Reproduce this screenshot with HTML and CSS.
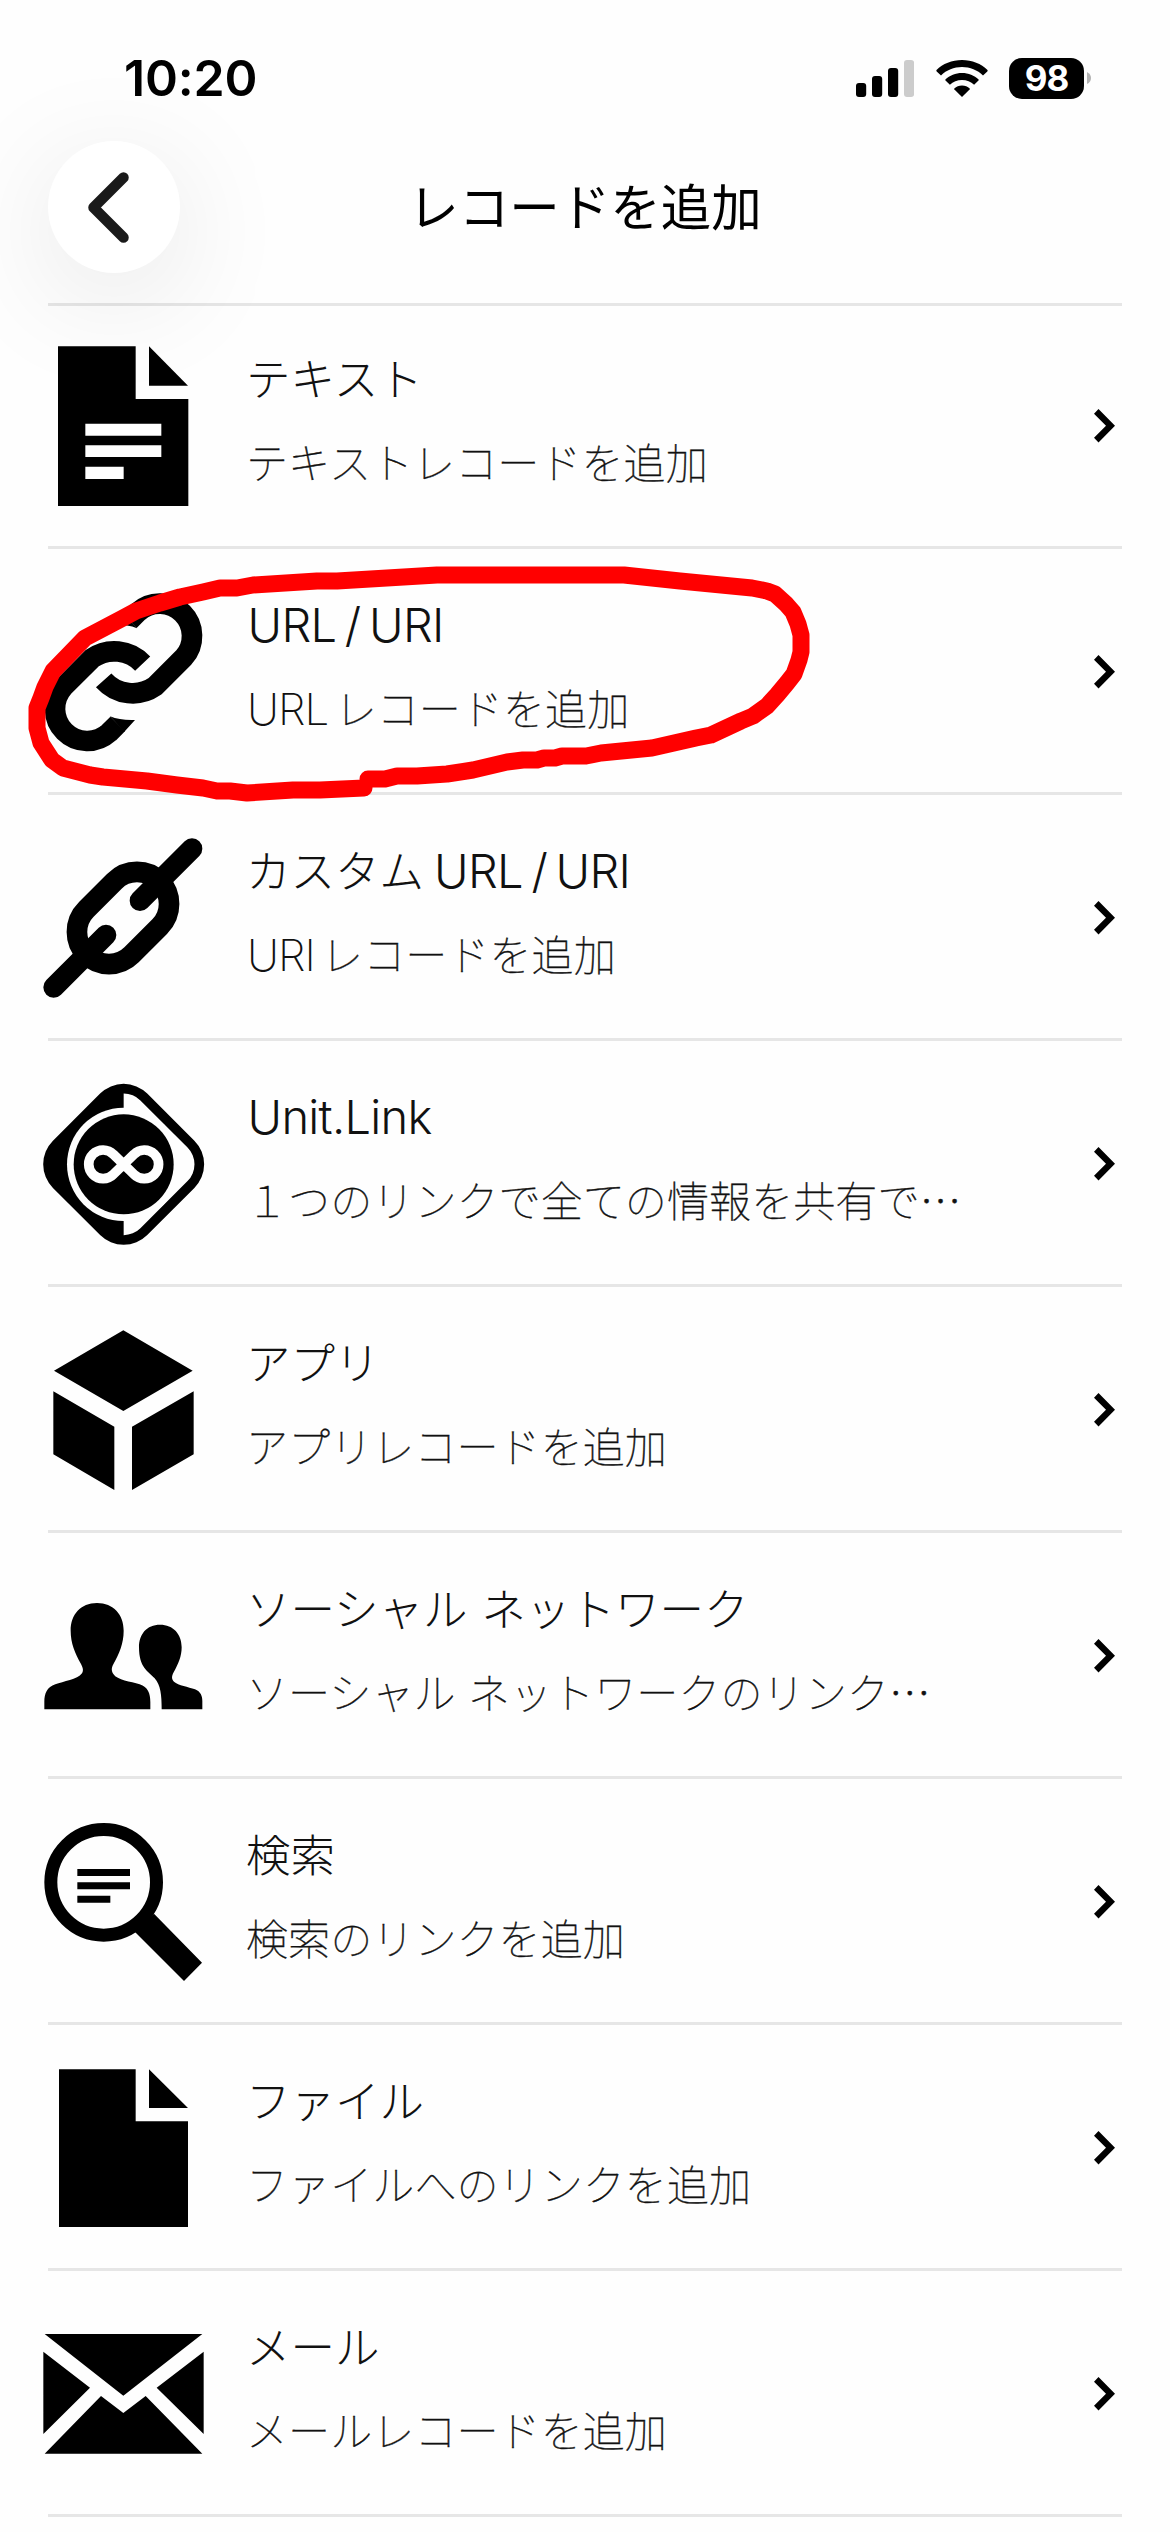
FILE: index.html
```html
<!DOCTYPE html>
<html lang="ja">
<head>
<meta charset="utf-8">
<title>レコードを追加</title>
<link rel="stylesheet" href="styles.css">
</head>
<body>
<div class="screen">
  <div class="status-bar">
    <span class="time">10:20</span>
    <div class="status-icons">
      <svg class="signal" viewBox="0 0 58 37">
        <rect x="0" y="23" width="10.2" height="14" rx="3"/>
        <rect x="16" y="16" width="10.2" height="21" rx="3"/>
        <rect x="32" y="8" width="10.2" height="29" rx="3"/>
        <rect class="dim" x="48" y="0" width="10.2" height="37" rx="3"/>
      </svg>
      <svg class="wifi" viewBox="0 0 52 37">
        <path d="M26 0C36 0 45.300 3.800 51.500 10Q52 10.800 51.300 11.500L47 15.500C41.500 10 34 7 26 7S10.500 10 5 15.500L.7 11.500Q0 10.800 .5 10C6.700 3.800 16 0 26 0Z"/>
        <path d="M26 13C32.500 13 38.300 15.500 42.600 19.500Q43 20.100 42.500 20.600L38.100 24.700C34.900 21.700 30.700 20 26 20S17.100 21.700 13.900 24.700L9.500 20.600Q9 20.100 9.400 19.500C13.700 15.500 19.500 13 26 13Z"/>
        <path d="M26 25.500C29 25.500 31.700 26.600 33.700 28.500Q34.100 29.100 33.600 29.600L26 37L18.400 29.600Q17.900 29.100 18.300 28.500C20.300 26.600 23 25.500 26 25.500Z"/>
      </svg>
      <div class="battery"><span class="battery-level">98</span></div>
      <svg class="battery-tip" viewBox="0 0 4 12"><path d="M0 0Q4 2 4 6T0 12Z"/></svg>
    </div>
  </div>

  <header class="nav">
    <button class="back" aria-label="戻る">
      <svg viewBox="0 0 132 132"><path d="M75.500 36.500L45.500 66.500L75.500 96.500"/></svg>
    </button>
    <h1 class="nav-title">レコードを追加</h1>
  </header>

  <ul class="list">
    <li class="row">
      <svg class="icon" viewBox="129 108 480 480">
        <path d="M174 109H407V267H565V588H174ZM256 341V377H484V341ZM256 406V441H484V406ZM256 470V507H371V470Z" fill-rule="evenodd"/>
        <path d="M447 109L564 227H447Z"/>
      </svg>
      <div class="label"><div class="title">テキスト</div><div class="sub">テキストレコードを追加</div></div>
      <svg class="chevron" viewBox="0 0 21 34"><path d="M4.500 0L21 16.700L4.500 33.500L0 28.800L12 16.700L0 4.700Z"/></svg>
    </li>
    <li class="row">
      <svg class="icon" viewBox="129 846 480 480">
        <g class="link">
          <path d="M428 1061A117 117 0 0 0 276 1045L190 1131A97 97 0 0 0 327 1268L353 1242"/>
          <path d="M311 1111A117 117 0 0 0 465 1129L551 1043A97 97 0 0 0 414 906L388 932"/>
        </g>
        <path d="M330 1219Q362 1232 405 1230L373 1265ZM411 955Q379 942 336 944L368 909Z"/>
      </svg>
      <div class="label"><div class="title"><span class="latin">URL / URI</span></div><div class="sub"><span class="latin">URL </span>レコードを追加</div></div>
      <svg class="chevron" viewBox="0 0 21 34"><path d="M4.500 0L21 16.700L4.500 33.500L0 28.800L12 16.700L0 4.700Z"/></svg>
    </li>
    <li class="row">
      <svg class="icon" viewBox="129 114 480 480">
        <path class="link" d="M259 328L343 244A96 96 0 0 1 479 380L395 464A96 96 0 0 1 259 328Z"/>
        <path class="bar" d="M576 146L420 302M161 562L318 405"/>
      </svg>
      <div class="label"><div class="title">カスタム<span class="latin"> URL / URI</span></div><div class="sub"><span class="latin">URI </span>レコードを追加</div></div>
      <svg class="chevron" viewBox="0 0 21 34"><path d="M4.500 0L21 16.700L4.500 33.500L0 28.800L12 16.700L0 4.700Z"/></svg>
    </li>
    <li class="row">
      <svg class="icon" viewBox="129 852 480 480">
        <defs><clipPath id="right-half"><rect x="371" y="852" width="241" height="482"/></clipPath></defs>
        <rect x="171" y="893" width="400" height="400" rx="100" transform="rotate(45 371 1093)"/>
        <g class="light">
          <g clip-path="url(#right-half)"><rect x="200" y="922" width="342" height="342" rx="71" transform="rotate(45 371 1093)"/></g>
          <circle cx="371" cy="1093" r="170"/>
        </g>
        <circle cx="371" cy="1093" r="150"/>
        <path class="infinity" d="M340 1063A43 43 0 1 0 340 1123L402 1063A43 43 0 1 1 402 1123Z"/>
      </svg>
      <div class="label"><div class="title"><span class="latin">Unit.Link</span></div><div class="sub">１つのリンクで全ての情報を共有で…</div></div>
      <svg class="chevron" viewBox="0 0 21 34"><path d="M4.500 0L21 16.700L4.500 33.500L0 28.800L12 16.700L0 4.700Z"/></svg>
    </li>
    <li class="row">
      <svg class="icon" viewBox="129 90 480 480">
        <path d="M370 91L578 212L370 333L162 212ZM160 274L343 380V570L160 463ZM581 274L396 380V570L581 463Z"/>
      </svg>
      <div class="label"><div class="title">アプリ</div><div class="sub">アプリレコードを追加</div></div>
      <svg class="chevron" viewBox="0 0 21 34"><path d="M4.500 0L21 16.700L4.500 33.500L0 28.800L12 16.700L0 4.700Z"/></svg>
    </li>
    <li class="row">
      <svg class="icon" viewBox="129 828 480 480">
        <path d="M291 909C340 909 371 943 371 992C371 1030 358 1060 340 1093C333 1106 335 1114 340 1122C352 1141 392 1144 419 1153C444 1162 451 1180 451 1206V1228H133V1206C133 1180 141 1162 166 1153C190 1144 232 1139 246 1120C251 1111 249 1104 243 1092C225 1058 212 1030 212 992C212 943 242 909 291 909Z"/>
        <path d="M480 974C520 974 545 1002 545 1042C545 1069 535 1092 521 1117C514 1130 515 1138 522 1145C535 1157 565 1160 585 1168C602 1175 607 1188 607 1203V1228H485C485 1185 482 1155 464 1135C444 1114 417 1103 417 1042C417 1002 440 974 480 974Z"/>
      </svg>
      <div class="label"><div class="title">ソーシャル ネットワーク</div><div class="sub">ソーシャル ネットワークのリンク…</div></div>
      <svg class="chevron" viewBox="0 0 21 34"><path d="M4.500 0L21 16.700L4.500 33.500L0 28.800L12 16.700L0 4.700Z"/></svg>
    </li>
    <li class="row">
      <svg class="icon" viewBox="129 126 480 480">
        <circle class="lens" cx="311" cy="307" r="158.500"/>
        <path d="M462 401L606 548L552 603L405 456ZM232 267H390V288H232ZM232 307H390V328H232ZM232 347H331V368H232Z"/>
      </svg>
      <div class="label"><div class="title">検索</div><div class="sub">検索のリンクを追加</div></div>
      <svg class="chevron" viewBox="0 0 21 34"><path d="M4.500 0L21 16.700L4.500 33.500L0 28.800L12 16.700L0 4.700Z"/></svg>
    </li>
    <li class="row">
      <svg class="icon" viewBox="129 864 480 480">
        <path d="M177 868H407V1024H564V1341H177ZM447 868L564 984H447Z"/>
      </svg>
      <div class="label"><div class="title">ファイル</div><div class="sub">ファイルへのリンクを追加</div></div>
      <svg class="chevron" viewBox="0 0 21 34"><path d="M4.500 0L21 16.700L4.500 33.500L0 28.800L12 16.700L0 4.700Z"/></svg>
    </li>
    <li class="row">
      <svg class="icon" viewBox="129 162 480 480">
        <path d="M134 222H607L370 407ZM130 275L270 383L130 522ZM611 275L470 383L611 522ZM134 581L303 408L370 459L437 408L607 581Z"/>
      </svg>
      <div class="label"><div class="title">メール</div><div class="sub">メールレコードを追加</div></div>
      <svg class="chevron" viewBox="0 0 21 34"><path d="M4.500 0L21 16.700L4.500 33.500L0 28.800L12 16.700L0 4.700Z"/></svg>
    </li>
  </ul>

  <svg class="marker" viewBox="0 0 1170 2532">
    <path d="M368 779L385 779L397 776L417 776L447 774L473 770L507 762L523 760L537 760L544 758L555 758L562 756L586 756L601 753L652 748L696 738L711 735L741 721L753 716L767 706L777 695L787 683L794 674L799 660L801 652L801 635L798 624L793 612L786 604L775 594L767 591L752 588L680 581L624 575L437 575L337 581L317 581L253 585L237 588L220 588L203 592L180 597L160 603L136 611L123 618L85 638L53 671L45 687L41 698L37 708L37 728L41 743L52 760L63 768L90 775L103 777L147 781L177 785L203 788L217 791L230 791L247 793L293 790L320 790L364 788"/>
  </svg>
</div>
</body>
</html>
```
FILE: styles.css
```css
* { box-sizing: border-box; }

body {
  margin: 0;
  background: #fefefe;
  color: #000;
  font-family: Inter, "Noto Sans CJK JP", sans-serif;
}

.screen {
  position: relative;
  width: 1170px;
  height: 2532px;
  overflow: hidden;
}

.status-bar {
  display: flex;
  justify-content: space-between;
  align-items: center;
  height: 140px;
  padding: 16px 79px 0 124px;
}

.time {
  font-size: 50px;
  font-weight: 600;
  line-height: 60px;
  letter-spacing: -0.200px;
}

.status-icons {
  display: flex;
  align-items: center;
}

.signal { width: 58px; height: 37px; margin-right: 22px; }
.signal .dim { fill: #ccc; }
.wifi { width: 52px; height: 37px; margin-right: 21px; }

.battery {
  display: flex;
  align-items: center;
  justify-content: center;
  width: 75px;
  height: 41px;
  border-radius: 13px;
  background: #000;
  color: #fff;
}

.battery-level {
  font-size: 35px;
  font-weight: 700;
  line-height: 41px;
  letter-spacing: -1px;
}

.battery-tip { width: 4px; height: 12px; margin-left: 3px; fill: #b3b3b3; }

.nav {
  display: grid;
  grid-template-columns: 132px 1fr 132px;
  align-items: center;
  height: 163px;
  padding: 0 48px 30px;
}

.back {
  width: 132px;
  height: 132px;
  padding: 0;
  border: 0;
  border-radius: 50%;
  background: #fff;
  box-shadow: 0 24px 120px rgba(0, 10, 10, 0.1);
}

.back svg {
  display: block;
  width: 132px;
  height: 132px;
  fill: none;
  stroke: #1a1a1a;
  stroke-width: 10.500;
  stroke-linecap: round;
  stroke-linejoin: round;
}

.nav-title {
  margin: 0;
  padding-bottom: 6px;
  font-family: "Noto Sans CJK JP", sans-serif;
  font-size: 50.500px;
  font-weight: 400;
  line-height: 60px;
  text-align: center;
}

.list {
  margin: 0 48px;
  padding: 0;
  list-style: none;
}

.row {
  display: flex;
  align-items: center;
  height: 246px;
  padding: 3px 7px 0 0;
  border-bottom: 3px solid #e6e6e6;
}

.row:first-child {
  padding-top: 0;
  border-top: 3px solid #e6e6e6;
}

.icon {
  flex: none;
  width: 160px;
  height: 160px;
  margin-left: -5px;
  overflow: visible;
}

.link { fill: none; stroke: #000; stroke-width: 62; }
.bar { fill: none; stroke: #000; stroke-width: 62; stroke-linecap: round; }
.light { fill: #fefefe; }
.infinity { fill: none; stroke: #fefefe; stroke-width: 29; }
.lens { fill: none; stroke: #000; stroke-width: 39; }

.label {
  flex: 1;
  margin-left: 43px;
  padding-bottom: 14px;
  color: #111;
  font-family: "Noto Sans CJK JP", sans-serif;
  line-height: 84px;
  white-space: nowrap;
}

.title { height: 84px; font-size: 44.500px; font-weight: 300; word-spacing: 4px; }
.sub {
  height: 84px;
  font-size: 42.100px;
  font-weight: 100;
  word-spacing: 3px;
  -webkit-text-stroke: 0.400px #111;
}
.latin { font-family: Inter, sans-serif; }
.title .latin {
  margin-left: 1.500px;
  font-size: 47px;
  font-weight: 300;
  letter-spacing: -0.700px;
  word-spacing: -4px;
}
.sub .latin {
  margin-left: 1px;
  font-size: 44px;
  font-weight: 200;
  letter-spacing: -1px;
  word-spacing: -5px;
  -webkit-text-stroke: 0;
}

.chevron { flex: none; width: 21px; height: 34px; }

/* Hand-drawn ring lying over the list */
.marker {
  position: absolute;
  top: 0;
  left: 0;
  width: 1170px;
  height: 2532px;
  fill: none;
  stroke: #f00;
  stroke-width: 17;
  stroke-linecap: round;
  stroke-linejoin: round;
  pointer-events: none;
}
```
